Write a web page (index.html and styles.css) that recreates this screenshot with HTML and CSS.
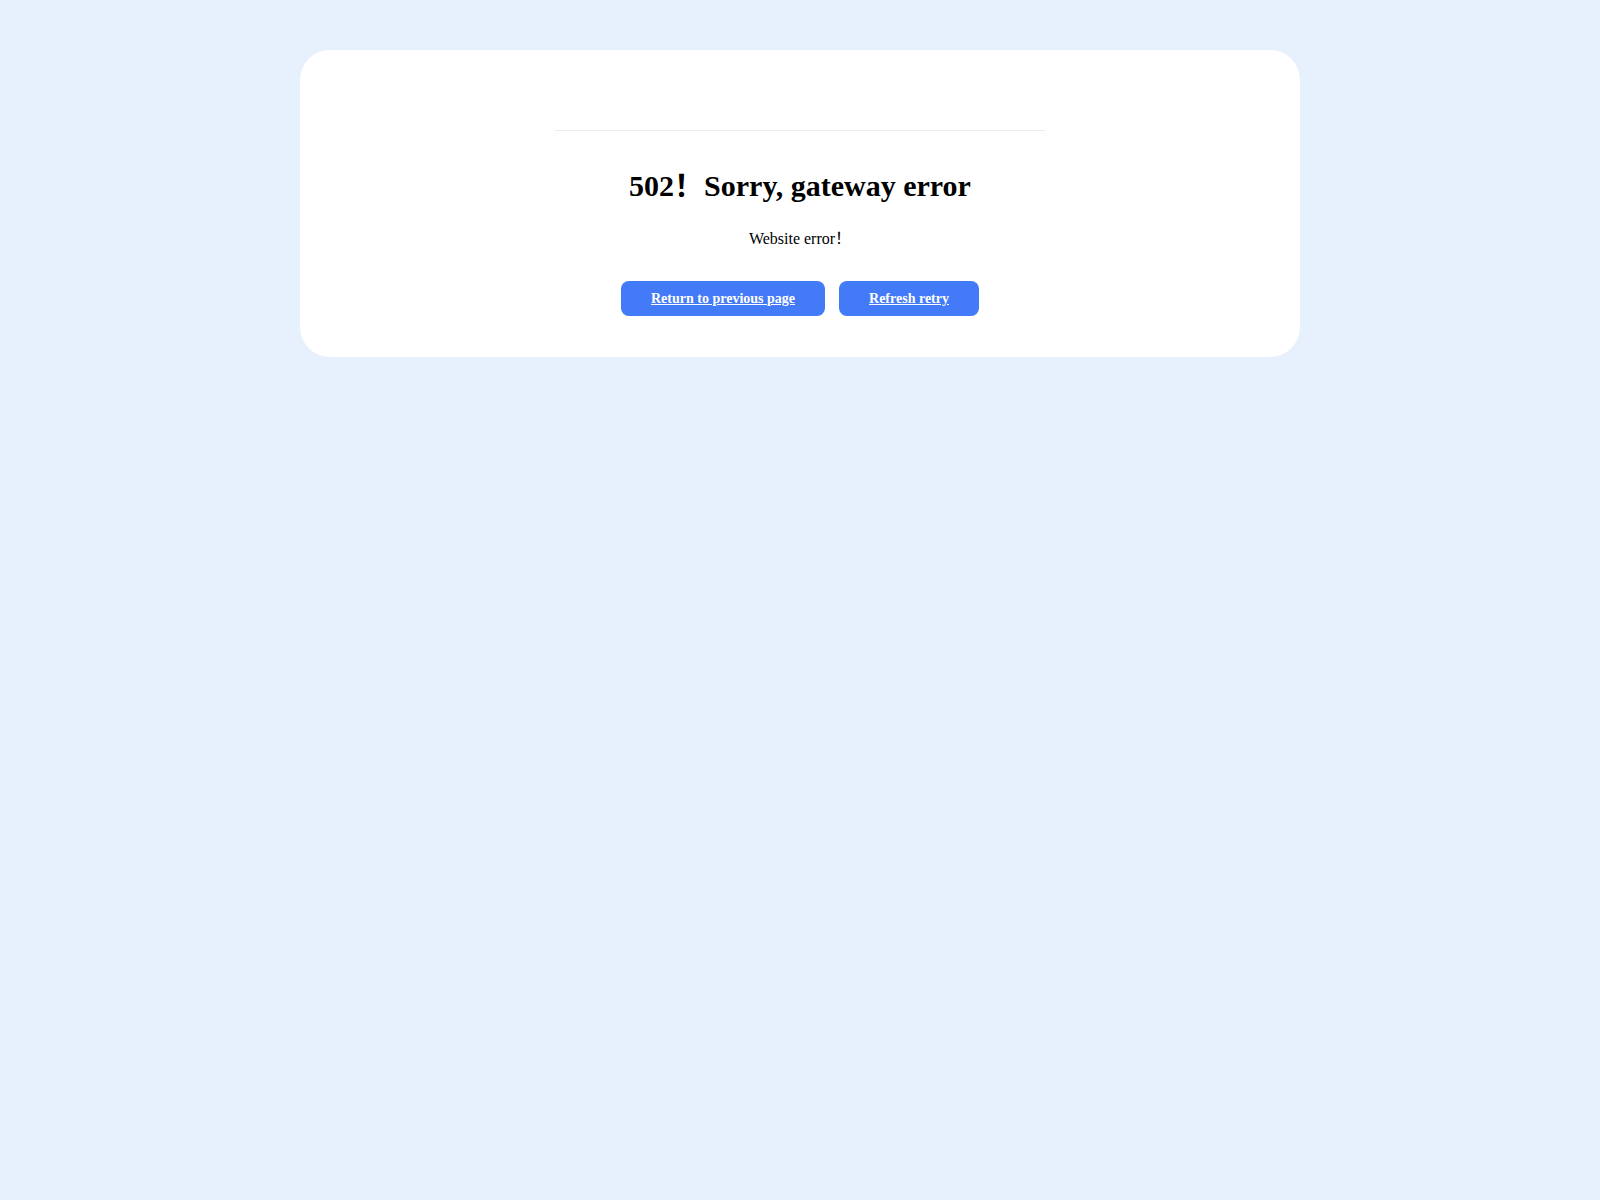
FILE: index.html
```html
<!DOCTYPE html>
<html lang="en">
  <head>
    <meta charset="UTF-8" />
    <meta name="viewport" content="width=device-width, initial-scale=1.0" />
    <title>502 Bad Gateway</title>
    <link rel="stylesheet" href="styles.css">
  </head>
  <body>
    <main class="card">
      <hr class="divider" />
      <h1 class="title">502！Sorry, gateway error</h1>
      <p class="message">Website error！</p>
      <div class="actions">
        <a class="btn" href="javascript:history.back()">Return to previous page</a>
        <a class="btn" href="javascript:location.reload()">Refresh retry</a>
      </div>
    </main>
  </body>
</html>
```

FILE: styles.css
```css
* {
  box-sizing: border-box;
}

body {
  margin: 0;
  min-height: 100vh;
  background: #e7f0fd;
  font-family: "Liberation Serif", "Noto Sans CJK SC", serif;
  color: #000;
}

.card {
  width: 1000px;
  margin: 50px auto 0;
  padding: 80px 0 41px;
  background: #fff;
  border-radius: 30px;
  text-align: center;
}

.divider {
  width: 490px;
  margin: 0 auto;
  border: 0;
  border-top: 1px solid #ebebeb;
}

.title {
  margin: 38px 0 0;
  font-size: 30px;
  font-weight: bold;
  line-height: 34px;
}

.message {
  margin: 27px 0 0;
  font-size: 16px;
  line-height: 18px;
}

.actions {
  display: flex;
  justify-content: center;
  gap: 14px;
  margin-top: 33px;
}

.btn {
  display: inline-block;
  height: 35px;
  padding: 0 30px;
  line-height: 35px;
  border-radius: 8px;
  background: #437af8;
  color: #fff;
  font-size: 14px;
  font-weight: bold;
}
```
